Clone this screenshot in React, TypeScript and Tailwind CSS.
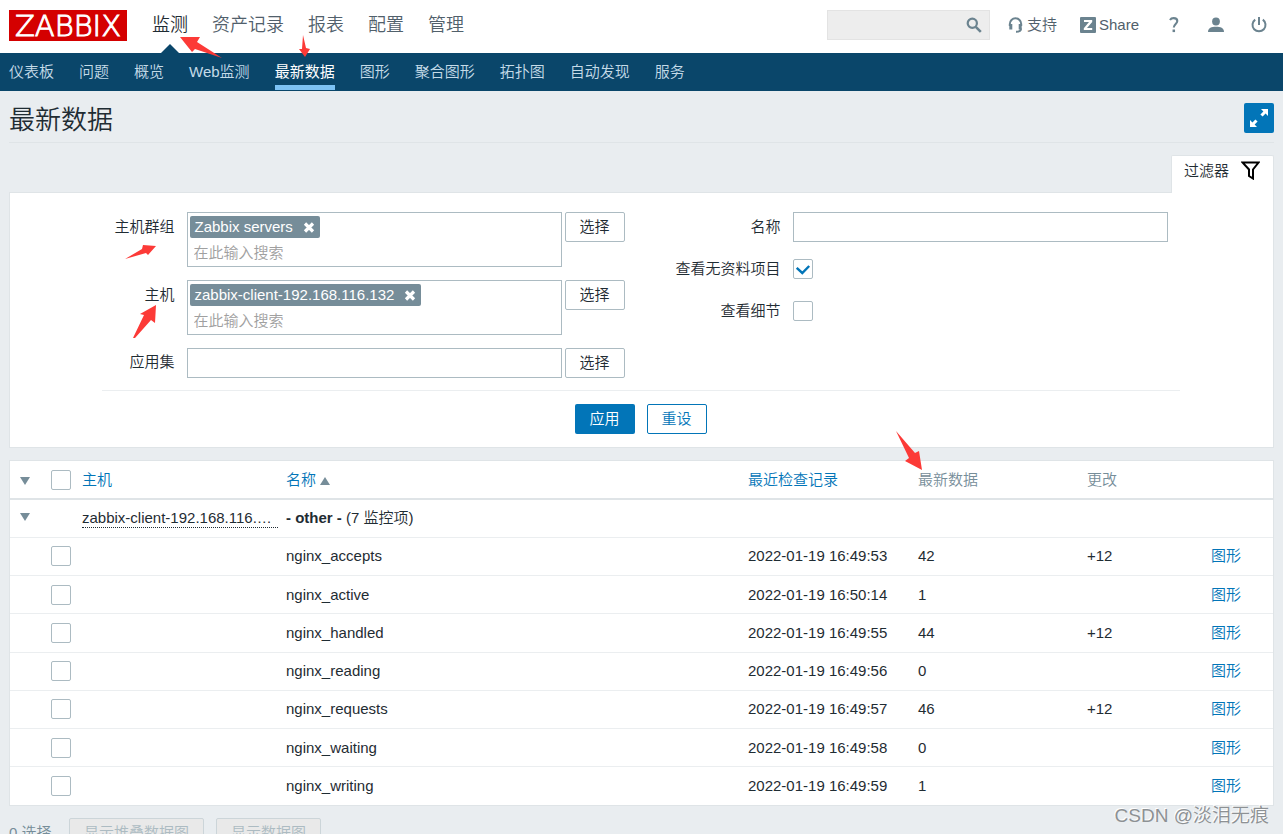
import { useState } from 'react';

const topMenu = ['监测', '资产记录', '报表', '配置', '管理'];
const subMenu = ['仪表板', '问题', '概览', 'Web监测', '最新数据', '图形', '聚合图形', '拓扑图', '自动发现', '服务'];

const items = [
  { name: 'nginx_accepts', time: '2022-01-19 16:49:53', value: '42', change: '+12' },
  { name: 'nginx_active', time: '2022-01-19 16:50:14', value: '1', change: '' },
  { name: 'nginx_handled', time: '2022-01-19 16:49:55', value: '44', change: '+12' },
  { name: 'nginx_reading', time: '2022-01-19 16:49:56', value: '0', change: '' },
  { name: 'nginx_requests', time: '2022-01-19 16:49:57', value: '46', change: '+12' },
  { name: 'nginx_waiting', time: '2022-01-19 16:49:58', value: '0', change: '' },
  { name: 'nginx_writing', time: '2022-01-19 16:49:59', value: '1', change: '' },
];

// Red pointer, points are given in the svg's own pixels
function Arrow({ points, width, height, className }: { points: string; width: number; height: number; className: string }) {
  return (
    <svg width={width} height={height} className={`absolute z-10 pointer-events-none ${className}`} aria-hidden="true">
      <polygon points={points} fill="#fc3a37" />
    </svg>
  );
}

function Checkbox({ id, label, defaultChecked }: { id: string; label?: string; defaultChecked?: boolean }) {
  return (
    <span className="relative block w-5 h-5 shrink-0">
      <input
        id={id}
        type="checkbox"
        aria-label={label}
        defaultChecked={defaultChecked}
        className="peer block appearance-none w-5 h-5 bg-white border border-[#acbbc2] rounded-xs"
      />
      <svg className="absolute inset-0 hidden peer-checked:block pointer-events-none" width="20" height="20" fill="none">
        <path d="M3.700 8.800l5.600 5.200 6.900-7" stroke="#0275b8" strokeWidth="2.400" />
      </svg>
    </span>
  );
}

function SelectButton() {
  return (
    <button type="button" className="w-[60px] h-[30px] shrink-0 bg-white border border-[#acbbc2] rounded-xs">
      选择
    </button>
  );
}

function MultiSelect({ id, value }: { id: string; value: string }) {
  const [selected, setSelected] = useState(true);

  return (
    <div className="w-[375px] h-[55px] shrink-0 border border-[#acbbc2] px-0.5 pt-[3px]">
      {selected && (
        <span className="flex w-fit h-[22px] items-center gap-2.5 pl-[5px] pr-[5px] rounded-xs bg-[#768d99] text-white">
          {value}
          <button type="button" aria-label="移除" onClick={() => setSelected(false)}>
            <svg width="12" height="11" fill="none">
              <path d="M2 1.500l8 8M10 1.500l-8 8" stroke="#fff" strokeWidth="3.200" />
            </svg>
          </button>
        </span>
      )}
      <input
        id={id}
        type="text"
        placeholder="在此输入搜索"
        className="block w-full h-7 px-1 outline-none placeholder:text-[#a0a0a0]"
      />
    </div>
  );
}

function Header() {
  return (
    <header>
      <div className="flex items-center h-[53px] pl-[9px] pr-4 bg-white">
        <a
          href="#"
          className="flex items-center justify-center w-[118px] h-[31px] pt-0.5 mb-0.5 bg-[#d40000] text-white text-[29px] leading-none font-['DejaVu_Sans',sans-serif] [-webkit-text-stroke:1px_#fff]"
        >
          ZABBIX
        </a>
        <nav className="flex gap-6 ml-[25px] text-[18px] leading-6 mb-1">
          {topMenu.map((label, i) => (
            <span key={label} className="relative">
              <a href="#" className={i === 0 ? 'text-[#1f2c33]' : 'text-[#51606b]'}>
                {label}
              </a>
              {i === 0 && (
                <>
                  <svg width="20" height="10" className="absolute left-2 top-[31px]">
                    <path d="M0 10L10 0l10 10z" fill="#0a466a" />
                  </svg>
                  <Arrow points="0,0 20,0 17,5 42,21 15,12 12,15" width={42} height={22} className="left-7 top-6" />
                </>
              )}
            </span>
          ))}
        </nav>
        <div className="flex items-center ml-auto mb-1 text-[#51606b]">
          <div className="flex items-center w-[163px] h-[30px] bg-[#ededed] border border-[#e3e3e3]">
            <input type="text" aria-label="搜索" className="min-w-0 flex-1 h-full px-2 outline-none" />
            <button type="button" aria-label="搜索" className="mr-[7px]">
              <svg width="16" height="16" fill="none" stroke="#6b838f">
                <circle cx="6.300" cy="6.300" r="4.600" strokeWidth="2.200" />
                <path d="M9.800 9.800l5 5" strokeWidth="2.600" />
              </svg>
            </button>
          </div>
          <a href="#" className="flex items-center gap-1 ml-[18px]">
            <svg width="15" height="16" fill="none" stroke="#6b838f">
              <path d="M1.800 9V7a5.700 5.700 0 0 1 11.400 0v2" strokeWidth="2" />
              <path d="M2.800 7v5.500M12.200 7v5.500" strokeWidth="3" />
              <path d="M13 11.500c0 2.400-1.500 3.300-5 3.300" strokeWidth="2" />
            </svg>
            支持
          </a>
          <a href="#" className="flex items-center gap-[3px] ml-[23px]">
            <svg width="16" height="16">
              <rect width="16" height="16" rx="1" fill="#6b838f" />
              <path d="M4 3h8.200v1.900L7 11h5.200v2.100H3.800v-1.900L9 5.100H4z" fill="#fff" />
            </svg>
            Share
          </a>
          <a href="#" aria-label="帮助" className="ml-[30px]">
            <svg width="10" height="16" fill="none" stroke="#6b838f">
              <path d="M1 3c.8-1.300 2-1.900 3.600-1.900C7 1.100 8.300 2.300 8.300 4.100c0 2.800-3.500 3-3.500 6.400" strokeWidth="2.100" />
              <path d="M4.800 12.500v2.600" strokeWidth="2.500" />
            </svg>
          </a>
          <a href="#" aria-label="用户" className="ml-[29px]">
            <svg width="16" height="16" fill="#6b838f">
              <circle cx="8" cy="4.500" r="3.900" />
              <path d="M0 15c0-4 3.500-5.200 8-5.200s8 1.200 8 5.200z" />
            </svg>
          </a>
          <a href="#" aria-label="退出" className="ml-[27px]">
            <svg width="16" height="16" fill="none" stroke="#6b838f" strokeWidth="2">
              <path d="M4.200 2.600a6.500 6.500 0 1 0 7.600 0" />
              <path d="M8 0v8" />
            </svg>
          </a>
        </div>
      </div>
      <nav className="flex gap-[25px] h-[38px] pl-[9px] bg-[#0a466a] text-[#c5dbe8]">
        {subMenu.map((label) => (
          <span key={label} className="relative">
            {label === '最新数据' ? (
              <>
                <a href="#" aria-current="page" className="block h-[37px] leading-[38px] text-white font-normal border-b-[5px] border-[#7dc3f5]">
                  {label}
                </a>
                <Arrow points="4,0 7,13 11,14 6,22 0,14 3,14" width={11} height={22} className="left-6 -top-[18px]" />
              </>
            ) : (
              <a href="#" className="block leading-[38px]">
                {label}
              </a>
            )}
          </span>
        ))}
      </nav>
    </header>
  );
}

function Filter() {
  return (
    <section>
      <div className="flex justify-end">
        <button type="button" className="relative flex items-center gap-3 h-[38px] w-[103px] -mb-px pl-3 pb-2 bg-white border border-b-0 border-[#dfe4e7] rounded-t-xs">
          过滤器
          <svg width="19" height="19" fill="none" stroke="#000" strokeWidth="2">
            <path d="M1.500 1.500h16l-5.500 7V17.500l-4-2.500V8.500z" />
          </svg>
        </button>
      </div>
      <form className="bg-white border border-[#dfe4e7] pt-[19px] pb-[13px] pr-0.5" onSubmit={(e) => e.preventDefault()}>
        <div className="w-[1078px] max-w-full mx-auto">
          <div className="flex gap-[50px]">
            <div className="grid grid-cols-[73px_438px] gap-x-3 gap-y-[13px] w-[523px]">
              <div className="relative text-right leading-[30px]">
                <label htmlFor="groups">主机群组</label>
                <Arrow points="0,14 17,4 18,0 31,1 23,10 21,8" width={31} height={14} className="right-[19px] top-[33px]" />
              </div>
              <div className="flex gap-[3px]">
                <MultiSelect id="groups" value="Zabbix servers" />
                <SelectButton />
              </div>
              <div className="relative text-right leading-[30px]">
                <label htmlFor="hosts">主机</label>
                <Arrow points="0,33 11,10 7,9 23,0 22,18 18,15 2,33" width={23} height={34} className="right-[19px] top-[25px]" />
              </div>
              <div className="flex gap-[3px]">
                <MultiSelect id="hosts" value="zabbix-client-192.168.116.132" />
                <SelectButton />
              </div>
              <label htmlFor="application" className="text-right leading-[28px]">
                应用集
              </label>
              <div className="flex gap-[3px]">
                <input id="application" type="text" className="w-[375px] h-[30px] shrink-0 px-1 border border-[#acbbc2]" />
                <SelectButton />
              </div>
            </div>
            <div className="grid grid-cols-[106px_375px] gap-3 content-start items-center">
              <label htmlFor="name" className="text-right leading-[30px]">
                名称
              </label>
              <input id="name" type="text" className="h-[30px] px-1 border border-[#acbbc2]" />
              <label htmlFor="empty" className="text-right leading-[30px]">
                查看无资料项目
              </label>
              <Checkbox id="empty" defaultChecked />
              <label htmlFor="details" className="text-right leading-[30px]">
                查看细节
              </label>
              <Checkbox id="details" />
            </div>
          </div>
          <div className="flex justify-center gap-3 mt-3 pt-[13px] border-t border-[#ebeef0]">
            <button type="submit" className="w-[60px] h-[30px] rounded-xs bg-[#0275b8] text-white">
              应用
            </button>
            <button type="reset" className="w-[60px] h-[30px] rounded-xs border border-[#0275b8] bg-white text-[#0275b8]">
              重设
            </button>
          </div>
        </div>
      </form>
    </section>
  );
}

function Triangle({ up }: { up?: boolean }) {
  return (
    <svg width="10" height="8" className="inline-block" aria-hidden="true">
      <path d={up ? 'M0 8l5-8 5 8z' : 'M0 0h10L5 8z'} fill="#768d99" />
    </svg>
  );
}

function LatestData() {
  return (
    <div className="mt-3 bg-white border border-[#dfe4e7]">
      <table className="w-full h-[344px] table-fixed text-left">
        <colgroup>
          <col className="w-9" />
          <col className="w-[31px]" />
          <col className="w-[204px]" />
          <col />
          <col className="w-[170px]" />
          <col className="w-[169px]" />
          <col className="w-[124px]" />
          <col className="w-[67px]" />
        </colgroup>
        <thead>
          <tr className="h-[38px] border-b-2 border-[#dfe4e7] text-[#768d99] [&>th]:font-[350] [&>th]:px-[5px]">
            <th>
              <button type="button" aria-label="全部折叠" className="block pl-[5px]">
                <Triangle />
              </button>
            </th>
            <th>
              <Checkbox id="all" label="全选" />
            </th>
            <th>
              <a href="#" className="text-[#0275b8]">主机</a>
            </th>
            <th>
              <a href="#" className="text-[#0275b8]">
                名称 <Triangle up />
              </a>
            </th>
            <th>
              <a href="#" className="text-[#0275b8]">最近检查记录</a>
            </th>
            <th className="relative">
              最新数据
              <Arrow points="0,0 19,22 23,20 26,39 9,30 13,27" width={26} height={39} className="-left-[17px] -top-[30px]" />
            </th>
            <th>更改</th>
            <th />
          </tr>
        </thead>
        <tbody>
          <tr className="h-[38px] border-b border-[#ebeef0] [&>td]:px-[5px]">
            <td>
              <button type="button" aria-label="折叠" className="block pl-[5px] pb-1">
                <Triangle />
              </button>
            </td>
            <td />
            <td>
              <a href="#" className="block w-[196px] truncate leading-[19px] border-b border-dotted border-[#1f2c33]">
                zabbix-client-192.168.116.132
              </a>
            </td>
            <td colSpan={5}>
              <b>- other -</b> (7 监控项)
            </td>
          </tr>
          {items.map((item) => (
            <tr key={item.name} className="h-[38px] border-b border-[#ebeef0] last:border-b-0 [&>td]:px-[5px]">
              <td />
              <td>
                <Checkbox id={item.name} label={item.name} />
              </td>
              <td />
              <td>{item.name}</td>
              <td>{item.time}</td>
              <td>{item.value}</td>
              <td>{item.change}</td>
              <td>
                <a href="#" className="text-[#0275b8]">图形</a>
              </td>
            </tr>
          ))}
        </tbody>
      </table>
    </div>
  );
}

export default function App() {
  return (
    <div className="relative h-screen overflow-hidden bg-[#e9edf0] text-[#1f2c33] text-[15px] leading-5 font-[350] font-['Liberation_Sans','Noto_Sans_CJK_SC',sans-serif]">
      <Header />
      <main className="px-[9px]">
        <div className="flex items-center justify-between h-[52px] pt-0.5 border-b border-[#dfe4e7] mb-3">
          <h1 className="text-[26px] leading-9 pt-1">最新数据</h1>
          <button type="button" aria-label="全屏" className="flex items-center justify-center w-[30px] h-[30px] rounded-xs bg-[#0275b8]">
            <svg width="18" height="18" fill="#fff">
              <path d="M11 0H18v7l-2.400-2.400-3 3-2.200-2.200 3-3zM7 18H0v-7l2.400 2.400 3-3 2.200 2.200-3 3z" />
            </svg>
          </button>
        </div>
        <Filter />
        <LatestData />
        <div className="flex items-center mt-3 text-[#768d99]">
          <span className="w-[60px]">0 选择</span>
          <button type="button" disabled className="h-[30px] px-3.5 mr-3 rounded-xs border border-[#ccd5d9] bg-[#e9e9e9] text-[#acbbc2]">
            显示堆叠数据图
          </button>
          <button type="button" disabled className="h-[30px] px-3.5 rounded-xs border border-[#ccd5d9] bg-[#e9e9e9] text-[#acbbc2]">
            显示数据图
          </button>
        </div>
      </main>
      <div className="absolute right-[14px] bottom-1 text-[19px] leading-7 text-[#8d9194] [text-shadow:-1px_-1px_0_#fff]">
        CSDN @淡泪无痕
      </div>
    </div>
  );
}
